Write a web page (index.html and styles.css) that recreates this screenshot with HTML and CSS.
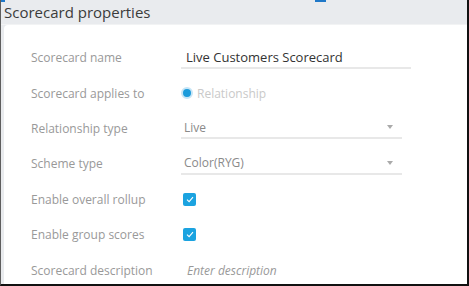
FILE: index.html
```html
<!DOCTYPE html>
<html lang="en">
<head>
    <meta charset="UTF-8">
    <title>Scorecard properties</title>
    <link rel="stylesheet" href="styles.css">
</head>
<body>
    <div class="frame">
        <div class="header">Scorecard properties</div>
        <div class="card">
            <div class="row">
                <span class="label">Scorecard name</span>
                <div class="field name-field">Live Customers Scorecard</div>
            </div>
            <div class="row">
                <span class="label">Scorecard applies to</span>
                <div class="radio">
                    <span class="dot"></span>
                    <span class="radio-text">Relationship</span>
                </div>
            </div>
            <div class="row">
                <span class="label">Relationship type</span>
                <div class="field select">
                    <span>Live</span>
                    <span class="arrow"></span>
                </div>
            </div>
            <div class="row">
                <span class="label">Scheme type</span>
                <div class="field select">
                    <span>Color(RYG)</span>
                    <span class="arrow"></span>
                </div>
            </div>
            <div class="row">
                <span class="label">Enable overall rollup</span>
                <span class="check">
                    <svg width="8" height="7" viewBox="0 0 8 7"><path d="M1 3.6 L3.1 5.6 L7 1.2" fill="none" stroke="#fff" stroke-width="1.1"/></svg>
                </span>
            </div>
            <div class="row">
                <span class="label">Enable group scores</span>
                <span class="check">
                    <svg width="8" height="7" viewBox="0 0 8 7"><path d="M1 3.6 L3.1 5.6 L7 1.2" fill="none" stroke="#fff" stroke-width="1.1"/></svg>
                </span>
            </div>
            <div class="row">
                <span class="label">Scorecard description</span>
                <span class="placeholder">Enter description</span>
            </div>
        </div>
    </div>
</body>
</html>
```

FILE: styles.css
```css
body {
    margin: 0;
    font-family: "Open Sans", "Liberation Sans", sans-serif;
}

.frame {
    position: relative;
    width: 469px;
    height: 286px;
    box-sizing: border-box;
    border-left: 1px solid #5e5e5e;
    border-right: 2px solid #111;
    border-bottom: 2px solid #111;
    background-color: #e9ebee;
    display: flex;
    flex-direction: column;
    overflow: hidden;
}

/* little blue marks along the top edge */
.frame::before,
.frame::after {
    content: "";
    position: absolute;
    top: 0;
    height: 2px;
    background-color: #1f78c8;
}

.frame::before {
    left: 0;
    width: 4px;
}

.frame::after {
    left: 314px;
    width: 11px;
}

.header {
    height: 27px;
    padding-left: 3px;
    font-size: 15px;
    line-height: 24px;
    color: #3b3b3b;
    border-bottom: 1px solid #f2f3f4;
}

.card {
    flex: 1;
    margin-left: 3px;
    background-color: #fff;
    border-radius: 4px 0 0 0;
    padding: 15px 0 0 27px;
    display: grid;
    grid-auto-rows: 35.4px;
    align-content: start;
}

.row {
    display: grid;
    grid-template-columns: 150px auto;
    align-items: center;
}

.label {
    font-size: 12px;
    color: #999;
}

.field {
    height: 22px;
    box-sizing: border-box;
    border-bottom: 2px solid #e8e8e8;
    display: flex;
    align-items: center;
    margin-top: 0;
}

.name-field {
    width: 230px;
    padding-left: 5px;
    font-size: 13px;
    color: #333;
}

.select {
    width: 221px;
    padding: 0 9px 0 3px;
    justify-content: space-between;
    font-size: 12px;
    color: #8a8a8a;
}

.arrow {
    width: 0;
    height: 0;
    border-left: 3px solid transparent;
    border-right: 3px solid transparent;
    border-top: 4px solid #aaa;
}

.radio {
    display: flex;
    align-items: center;
    gap: 4px;
}

.dot {
    flex: none;
    width: 8px;
    height: 8px;
    border-radius: 50%;
    background-color: #1a9bdb;
    border: 2px solid #c6e5f6;
}

.radio-text {
    font-size: 12px;
    color: #c9c9c9;
}

.check {
    width: 13px;
    height: 13px;
    margin-left: 2px;
    border-radius: 2px;
    background-color: #1ba3e0;
    display: flex;
    align-items: center;
    justify-content: center;
}

.placeholder {
    padding-left: 6px;
    font-size: 12px;
    font-style: italic;
    color: #999;
}
```
